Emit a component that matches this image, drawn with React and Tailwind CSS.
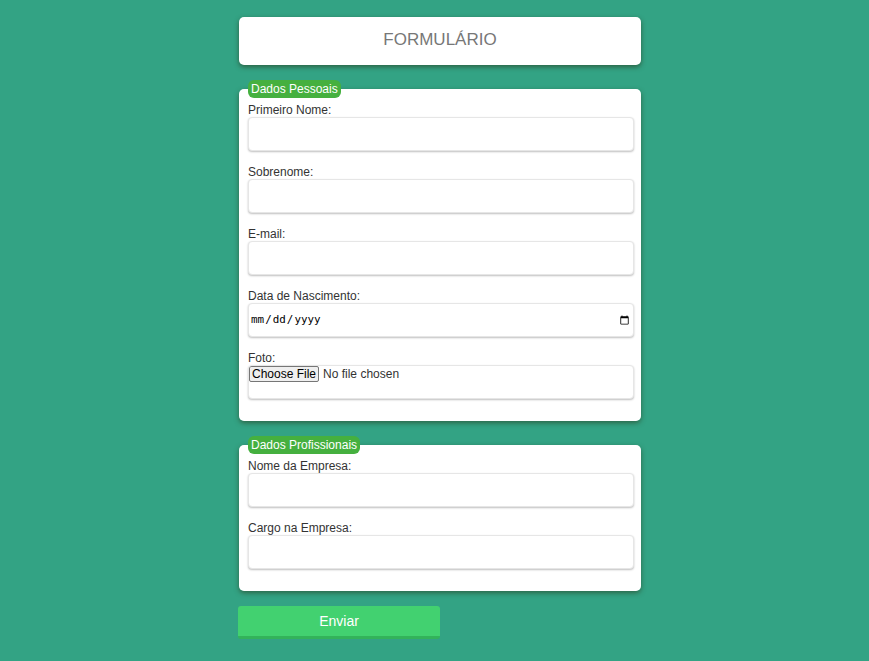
import React from "react";

const boxCls =
  "block w-full h-[34px] bg-white border border-[#e6e6e6] rounded-[4px] shadow-[0_1px_2px_rgba(0,0,0,0.25)] mb-[14px]";

function Field({ label, type = "text" }) {
  return (
    <>
      <label className="block text-[12px] leading-[14px] text-[#333]">{label}</label>
      {type === "file" ? (
        <input
          type="file"
          className={
            boxCls +
            " text-[12px] leading-[14px] text-[#333] file:bg-[#efefef] file:border file:border-solid file:border-[#767676] file:rounded-[2px] file:px-[2px] file:py-0 file:mr-[4px] file:text-[12px] file:leading-[14px] file:text-black"
          }
        />
      ) : type === "date" ? (
        <input type="date" className={boxCls + " font-['DejaVu_Sans_Mono',monospace] text-[10.9px] text-black pl-px pr-px"} />
      ) : (
        <input type={type} className={boxCls + " text-[12px] text-[#333] px-2"} />
      )}
    </>
  );
}

function Section({ title, children }) {
  return (
    <fieldset className="bg-white rounded-[5px] pl-[9px] pr-[7px] pb-[8px] shadow-[0_2px_5px_rgba(40,60,30,0.6)] mb-[15px]">
      <legend className="bg-[#45b03f] text-white text-[12px] leading-[18px] px-[3px] rounded-[6px] mb-[5px]">
        {title}
      </legend>
      {children}
    </fieldset>
  );
}

export default function App() {
  return (
    <div className="min-h-[661px] bg-[#33a384] font-['Liberation_Sans',Arial,sans-serif]">
      <div className="w-[402px] ml-[239px] pt-[17px]">
        <div className="bg-white rounded-[5px] h-[48px] flex items-center justify-center shadow-[0_2px_5px_rgba(40,60,30,0.65)] mb-[15px]">
          <h1 className="text-[17px] leading-[20px] -mt-[2px] text-[#777]">FORMULÁRIO</h1>
        </div>
        <form>
          <Section title="Dados Pessoais">
            <Field label="Primeiro Nome:" />
            <Field label="Sobrenome:" />
            <Field label="E-mail:" type="email" />
            <Field label="Data de Nascimento:" type="date" />
            <Field label="Foto:" type="file" />
          </Section>
          <Section title="Dados Profissionais">
            <Field label="Nome da Empresa:" />
            <Field label="Cargo na Empresa:" />
          </Section>
          <button
            type="button"
            className="-ml-px w-[202px] h-[33px] bg-[#42d170] border-b-[3px] border-[#33b35a] rounded-[3px] text-white text-[14px]"
          >
            Enviar
          </button>
        </form>
      </div>
    </div>
  );
}
